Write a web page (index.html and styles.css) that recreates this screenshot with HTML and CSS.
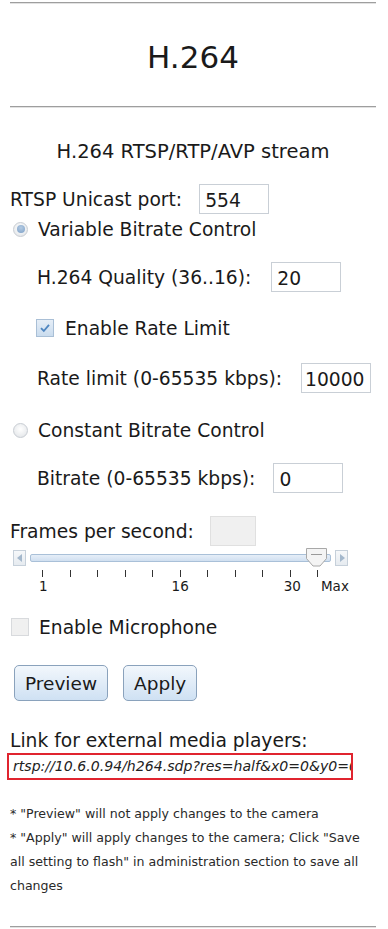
FILE: index.html
```html
<!DOCTYPE html>
<html lang="en">
<head>
<meta charset="utf-8">
<title>H.264</title>
<link rel="stylesheet" href="styles.css">
</head>
<body>
<div class="page">
  <hr class="rule rule-top">
  <h1 class="title">H.264</h1>
  <hr class="rule">
  <p class="subtitle">H.264 RTSP/RTP/AVP stream</p>

  <div class="row row-port">
    <span class="label">RTSP Unicast port:</span>
    <span class="field">554</span>
  </div>

  <div class="row row-vbr">
    <span class="radio checked"></span>
    <span class="label">Variable Bitrate Control</span>
  </div>

  <div class="row row-quality indent">
    <span class="label">H.264 Quality (36..16):</span>
    <span class="field">20</span>
  </div>

  <div class="row row-enable indent-cb">
    <span class="checkbox checked">
      <svg viewBox="0 0 12 12" width="12" height="12"><path d="M2 6.2 L4.8 9 L10 2.8" fill="none" stroke="#4f86c0" stroke-width="1.8"/></svg>
    </span>
    <span class="label">Enable Rate Limit</span>
  </div>

  <div class="row row-ratelimit indent">
    <span class="label">Rate limit (0-65535 kbps):</span>
    <span class="field field-tight">10000</span>
  </div>

  <div class="row row-cbr">
    <span class="radio"></span>
    <span class="label">Constant Bitrate Control</span>
  </div>

  <div class="row row-bitrate indent">
    <span class="label">Bitrate (0-65535 kbps):</span>
    <span class="field">0</span>
  </div>

  <div class="row row-fps">
    <span class="label">Frames per second:</span>
    <span class="fps-box"></span>
  </div>

  <div class="slider">
    <span class="arrow arrow-left"><svg viewBox="0 0 6 8" width="6" height="8"><path d="M5 0 L0 4 L5 8 Z" fill="#a4b8cc"/></svg></span>
    <span class="track">
      <span class="thumb">
        <svg viewBox="0 0 23 19" width="23" height="19"><path d="M1.5 0.5 H21.5 V10.5 L15 18 H8 L1.5 10.5 Z" fill="#f4f4f4" stroke="#a8a8a8"/><path d="M6 6.5 H17" stroke="#9a9a9a" stroke-width="1"/></svg>
      </span>
    </span>
    <span class="arrow arrow-right"><svg viewBox="0 0 6 8" width="6" height="8"><path d="M1 0 L6 4 L1 8 Z" fill="#a4b8cc"/></svg></span>
  </div>
  <div class="ticks">
    <i></i><i></i><i></i><i></i><i></i><i></i><i></i><i></i><i></i><i></i><i></i>
  </div>
  <div class="scale">
    <span class="lab lab-1">1</span>
    <span class="lab lab-16">16</span>
    <span class="lab lab-30">30</span>
    <span class="lab lab-max">Max</span>
  </div>

  <div class="row row-mic">
    <span class="checkbox"></span>
    <span class="label">Enable Microphone</span>
  </div>

  <div class="buttons">
    <button class="btn btn-preview" type="button">Preview</button>
    <button class="btn btn-apply" type="button">Apply</button>
  </div>

  <p class="link-label">Link for external media players:</p>
  <div class="link-box">rtsp://10.6.0.94/h264.sdp?res=half&amp;x0=0&amp;y0=0&amp;x1=1600&amp;y1=1200&amp;qp=20&amp;ratelimit=10000&amp;doublescan=0&amp;ssn=1</div>

  <div class="notes">
    <p>* "Preview" will not apply changes to the camera</p>
    <p>* "Apply" will apply changes to the camera; Click "Save all setting to flash" in administration section to save all changes</p>
  </div>

  <hr class="rule rule-bottom">
</div>
</body>
</html>
```

FILE: styles.css
```css
* { box-sizing: border-box; }

html, body {
  margin: 0;
  padding: 0;
  background: #ffffff;
}

body {
  font-family: "DejaVu Sans", Verdana, sans-serif;
  font-size: 18.7px;
  color: #1a1a1a;
}

.page {
  width: 388px;
  padding: 0 12px 0 10px;
  overflow: hidden;
}

.rule {
  margin: 0;
  height: 0;
  border: 0;
  border-top: 1px solid #9e9e9e;
  border-bottom: 1px solid #e2e2e2;
}

.rule-top { margin-top: 2px; }

.title {
  margin: 0;
  height: 102px;
  padding-top: 4px;
  line-height: 98px;
  text-align: center;
  font-size: 31px;
  font-weight: normal;
}

.subtitle {
  margin: 30px 0 0;
  height: 28px;
  line-height: 28px;
  text-align: center;
  font-size: 19.5px;
}

.row {
  display: flex;
  align-items: center;
}

.label { white-space: nowrap; }

.field {
  display: flex;
  align-items: center;
  width: 70px;
  height: 30px;
  padding: 3px 0 0 5px;
  border: 1px solid #c9cfd6;
  background: #fff;
  font-size: 18.7px;
  flex: none;
}

.indent { padding-left: 27px; }
.indent-cb { padding-left: 26px; }

.row-port { margin-top: 18px; height: 30px; }
.row-port .field { margin-left: 17px; }

.row-vbr { margin-top: 5px; height: 20px; }

.row-quality { margin-top: 23px; height: 30px; }
.row-quality .field { margin-left: 20px; }

.row-enable { margin-top: 26px; height: 20px; }

.row-ratelimit { margin-top: 25px; height: 30px; }
.row-ratelimit .field { margin-left: 19px; padding-left: 3px; }

.row-cbr { margin-top: 27px; height: 20px; }

.row-bitrate { margin-top: 23px; height: 30px; }
.row-bitrate .field { margin-left: 18px; }

.row-fps { margin-top: 23px; height: 30px; }
.row-mic { margin-top: 22px; height: 20px; }

.radio {
  width: 15px;
  height: 15px;
  margin: 0 10px 0 3px;
  border-radius: 50%;
  border: 1px solid #c8cdd3;
  background: radial-gradient(circle at 50% 40%, #ffffff 0%, #eceef0 60%, #dadde1 100%);
  position: relative;
  flex: none;
}

.radio.checked::after {
  content: "";
  position: absolute;
  left: 2.5px;
  top: 2.5px;
  width: 8px;
  height: 8px;
  border-radius: 50%;
  background: radial-gradient(circle at 50% 35%, #b4cbe3 0%, #7c9fc6 100%);
}

.checkbox {
  width: 18px;
  height: 18px;
  flex: none;
  display: flex;
  align-items: center;
  justify-content: center;
  border: 1px solid #d8dadd;
  background: #f0f0f0;
}

.row-enable .checkbox { margin-right: 11px; }
.row-mic .checkbox { margin: 0 10px 0 1px; }

.checkbox.checked {
  border: 1px solid #a9bfd6;
  background: linear-gradient(#e6eef7, #cadcee);
}

.fps-box {
  width: 46px;
  height: 30px;
  margin-left: 16px;
  border: 1px solid #e0e0e0;
  background: #f0f0f0;
}

.slider {
  display: flex;
  align-items: center;
  margin-top: 2px;
  height: 19px;
  padding-left: 3px;
}

.arrow {
  width: 13px;
  height: 16px;
  flex: none;
  display: flex;
  align-items: center;
  justify-content: center;
  border: 1px solid #c6d0da;
  background: linear-gradient(#f6f8fa, #e6ebf0);
}

.track {
  position: relative;
  width: 301px;
  height: 8px;
  margin: 0 4px;
  border: 1px solid #a9c0d8;
  border-radius: 2px;
  background: linear-gradient(#e6eef8, #d0dff0);
}

.thumb {
  position: absolute;
  left: 274px;
  top: -7px;
  width: 23px;
  height: 19px;
  display: block;
}

.thumb svg { display: block; }

.ticks {
  display: flex;
  justify-content: space-between;
  width: 276px;
  margin: 3px 0 0 32px;
  height: 7px;
}

.ticks i {
  display: block;
  width: 1px;
  height: 7px;
  background: #333;
}

.scale {
  display: flex;
  height: 18px;
  margin-top: 0;
  font-size: 13.5px;
  line-height: 18px;
}

.lab-1 { margin-left: 29px; }
.lab-16 { margin-left: 124px; }
.lab-30 { margin-left: 95px; }
.lab-max { margin-left: 20px; }

.buttons {
  display: flex;
  gap: 15px;
  margin-top: 28px;
  padding-left: 4px;
}

.btn {
  height: 36px;
  padding: 0 10px;
  border: 1px solid #8aa2bc;
  border-radius: 5px;
  background: linear-gradient(#f2f7fc, #cfe1f3);
  font-family: "DejaVu Sans", Verdana, sans-serif;
  font-size: 18.5px;
  color: #1a1a1a;
}

.link-label {
  margin: 29px 0 0;
  height: 22px;
  line-height: 22px;
  font-size: 18.7px;
}

.link-box {
  margin: 1px 0 0 -3px;
  width: 346px;
  height: 27px;
  line-height: 23px;
  padding: 0 4px;
  border: 2px solid #e0242f;
  font-style: italic;
  font-size: 14.1px;
  white-space: nowrap;
  overflow: hidden;
  color: #222;
}

.notes {
  width: 360px;
  margin-top: 22px;
  font-size: 12.6px;
  line-height: 24px;
  color: #2a2a2a;
}

.notes p { margin: 0; }

.rule-bottom { margin-top: 28px; }
```
